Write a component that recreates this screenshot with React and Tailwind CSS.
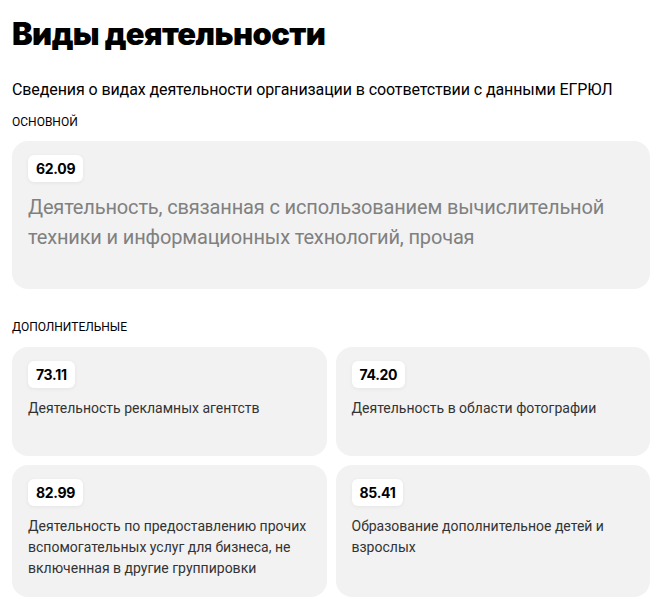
import React from "react";

const extra = [
  { code: "73.11", name: "Деятельность рекламных агентств" },
  { code: "74.20", name: "Деятельность в области фотографии" },
  {
    code: "82.99",
    name: "Деятельность по предоставлению прочих вспомогательных услуг для бизнеса, не включенная в другие группировки",
  },
  { code: "85.41", name: "Образование дополнительное детей и взрослых" },
];

function Badge({ code }) {
  return (
    <span className="inline-flex h-[27px] items-center rounded-md bg-white px-2 font-['Inter',sans-serif] text-[14px] font-bold leading-none tracking-[-0.3px] text-black shadow-[0_1px_4px_rgba(0,0,0,0.06)]">
      {code}
    </span>
  );
}

export default function App() {
  return (
    <div className="min-h-screen bg-white px-3 font-['Roboto',sans-serif] text-[#1a1a1a]">
      {/* Header */}
      <h1 className="pt-[14px] font-['Inter',sans-serif] text-[31px] font-black leading-[40px] tracking-[-0.6px] text-black">
        Виды деятельности
      </h1>
      <p className="mt-[26px] text-[16px] leading-[20px] tracking-[-0.1px] text-black">
        Сведения о видах деятельности организации в соответствии с данными ЕГРЮЛ
      </p>

      {/* Main activity */}
      <div className="mt-[14px] text-[12px] uppercase leading-[16px] text-black">
        Основной
      </div>
      <div className="mt-[11px] rounded-2xl bg-[#f2f2f2] px-4 pb-[37px] pt-[14px]">
        <Badge code="62.09" />
        <p className="mt-[10px] text-[20px] leading-[30px] tracking-[-0.15px] text-[#808080]">
          Деятельность, связанная с использованием вычислительной техники и
          информационных технологий, прочая
        </p>
      </div>

      {/* Additional activities */}
      <div className="mt-[30px] text-[12px] uppercase leading-[16px] text-black">
        Дополнительные
      </div>
      <div className="mt-[12px] grid grid-cols-2 gap-x-[9px] gap-y-[9px]">
        {extra.map((item) => (
          <div
            key={item.code}
            className="min-h-[109px] rounded-2xl bg-[#f2f2f2] px-4 pb-[18px] pt-[14px]"
          >
            <Badge code={item.code} />
            <p className="mt-[10px] text-[14px] leading-[21px] text-[#333]">
              {item.name}
            </p>
          </div>
        ))}
      </div>
    </div>
  );
}
